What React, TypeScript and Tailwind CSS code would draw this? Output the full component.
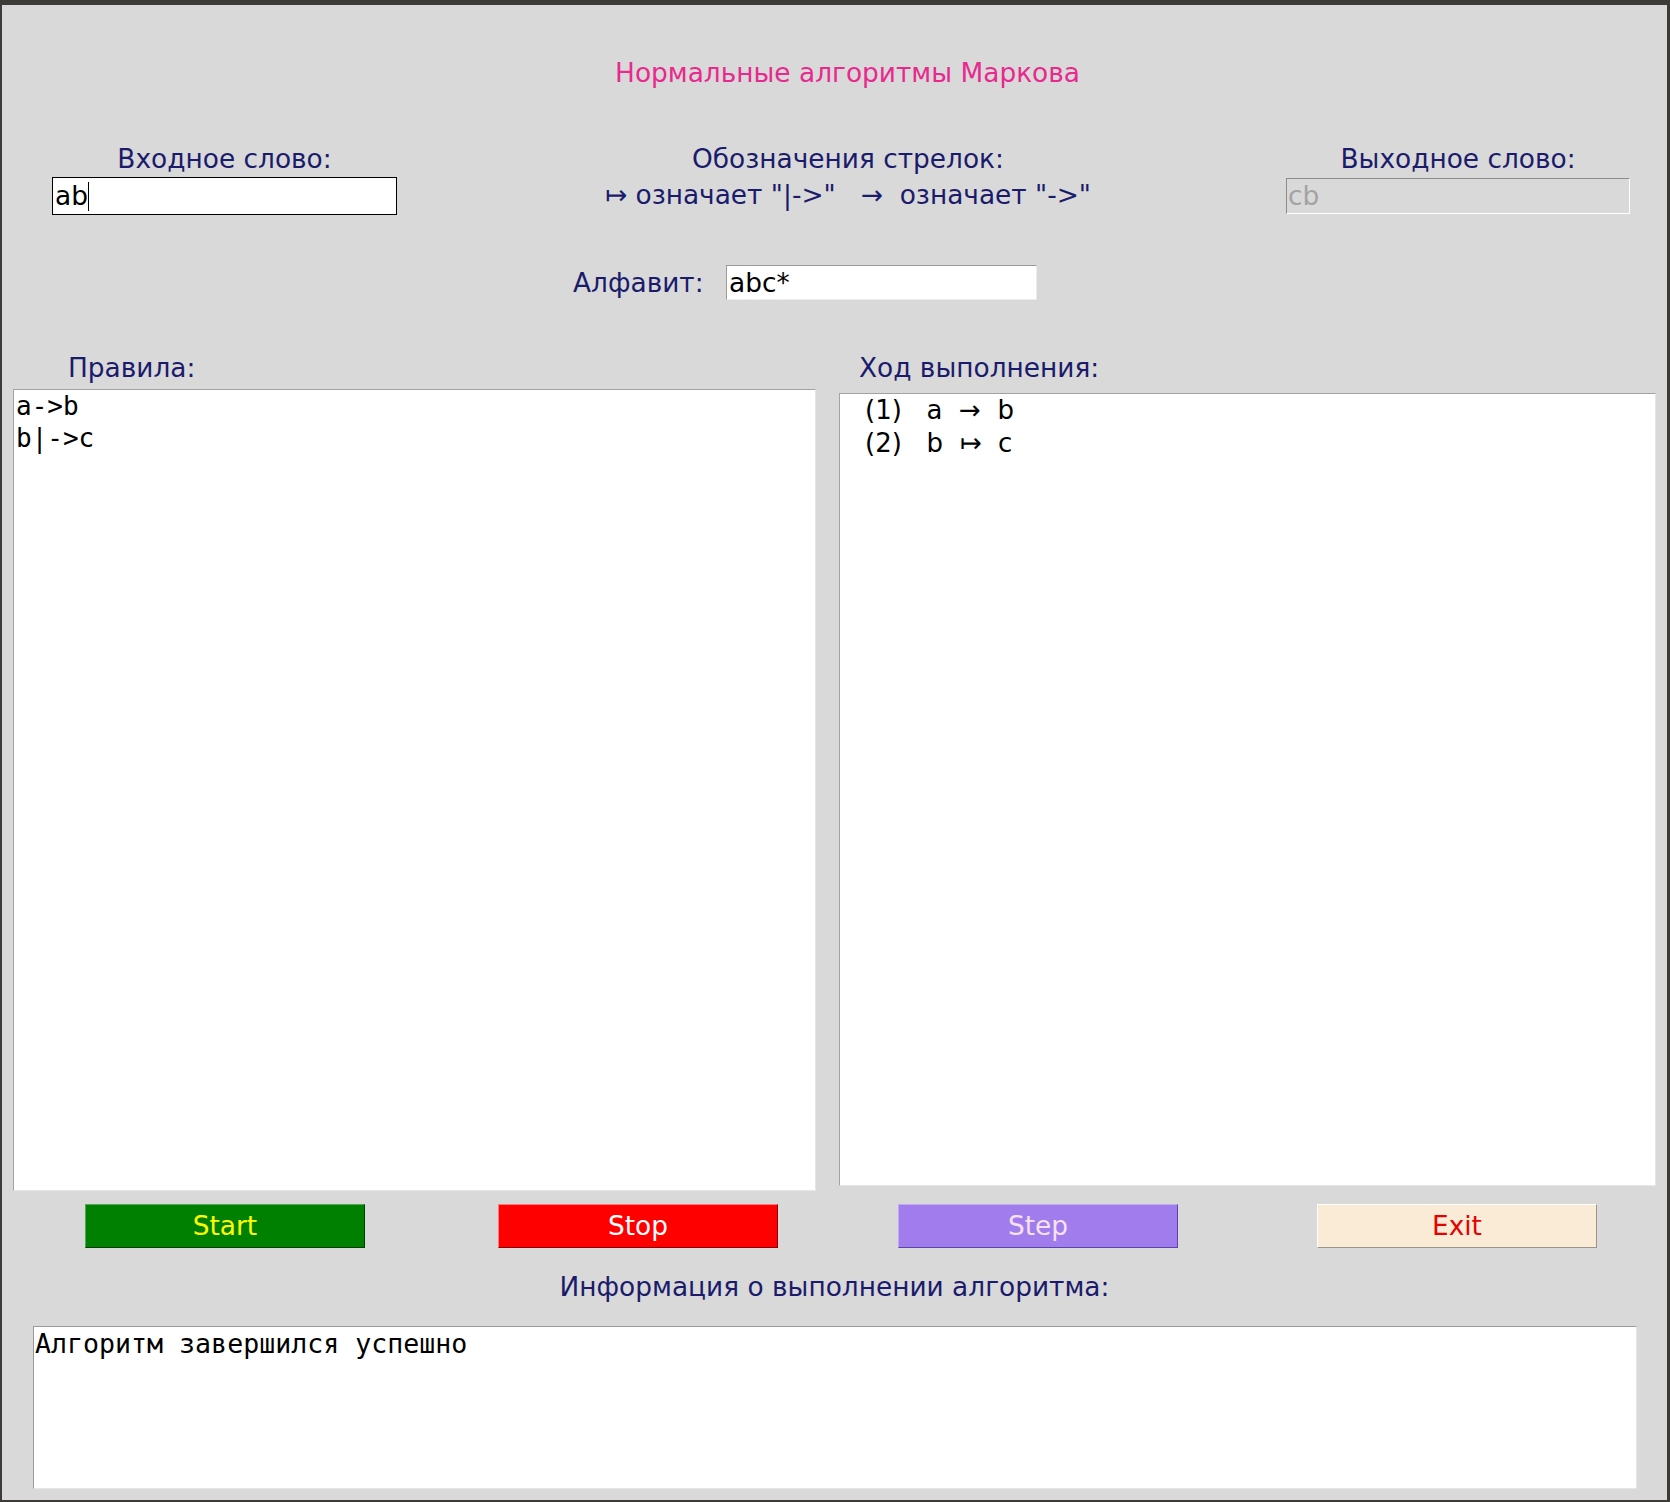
import React from 'react';

const sans = { fontFamily: '"DejaVu Sans", "Noto Sans", sans-serif' };
const mono = { fontFamily: '"DejaVu Sans Mono", "Liberation Mono", monospace' };

function Label({ children, className = '' }: { children: React.ReactNode; className?: string }) {
  return (
    <div className={`h-[30px] leading-[30px] text-[26.4px] text-[#1b1b6c] whitespace-pre ${className}`}>
      {children}
    </div>
  );
}

export default function App() {
  const buttons = [
    { label: 'Start', cls: 'ml-[83px] bg-[#008000] text-[#ffff00] border-t-[#52a852] border-l-[#52a852] border-b-[#004000] border-r-[#004000]' },
    { label: 'Stop', cls: 'ml-[133px] bg-[#ff0000] text-white border-t-[#ff7a7a] border-l-[#ff7a7a] border-b-[#8a0000] border-r-[#8a0000]' },
    { label: 'Step', cls: 'ml-[120px] bg-[#a07cec] text-[#f7e1ec] border-t-[#c2a9f5] border-l-[#c2a9f5] border-b-[#5e44a8] border-r-[#5e44a8]' },
    { label: 'Exit', cls: 'ml-[139px] bg-[#faebd7] text-[#e60000] border-t-white border-l-white border-b-[#9c958a] border-r-[#9c958a]' },
  ];

  return (
    <div className="w-[1670px] h-[1502px] bg-[#3c3b37] pt-[5px] pl-[2px] pr-[3px] pb-[2px]" style={sans}>
      <div className="h-full bg-[#d9d9d9] flex flex-col">
        {/* Title */}
        <div className="mt-[53px] pl-[26px] text-center h-[30px] leading-[30px] text-[26.4px] text-[#e8298f]">
          Нормальные алгоритмы Маркова
        </div>

        {/* Input / legend / output */}
        <div className="mt-[56px] flex items-start">
          <div className="ml-[50px] w-[345px] flex flex-col items-center">
            <Label>Входное слово:</Label>
            <div className="mt-[3px] w-full h-[38px] bg-white border border-black flex items-center pl-[2px] text-[26.4px] text-black">
              <span>ab</span>
              <span className="inline-block w-[1px] h-[29px] bg-black" />
            </div>
          </div>
          <div className="ml-[201px] w-[500px] flex flex-col items-center">
            <Label>Обозначения стрелок:</Label>
            <Label className="mt-[6px]">{'↦ означает "|->"   →  означает "->"'}</Label>
          </div>
          <div className="ml-[188px] w-[344px] flex flex-col items-center">
            <Label>Выходное слово:</Label>
            <div className="mt-[4px] w-full h-[36px] border border-t-[#8c8c8c] border-l-[#8c8c8c] border-b-white border-r-white flex items-center pl-[1px] text-[26.4px] text-[#a3a3a3]">
              cb
            </div>
          </div>
        </div>

        {/* Alphabet */}
        <div className="mt-[50px] flex items-center h-[35px]">
          <Label className="ml-[571px] w-[153px]">Алфавит:</Label>
          <div className="w-[311px] h-[35px] bg-white border border-t-[#9a9a9a] border-l-[#9a9a9a] border-b-[#ececec] border-r-[#ececec] flex items-center pl-[2px] text-[26.4px] text-black">
            abc*
          </div>
        </div>

        {/* Section labels */}
        <div className="mt-[53px] flex">
          <Label className="ml-[66px] w-[725px]">Правила:</Label>
          <Label className="ml-[66px]">Ход выполнения:</Label>
        </div>

        {/* Rules and trace */}
        <div className="flex items-start h-[808px]">
          <div
            className="ml-[11px] mt-[6px] w-[803px] h-[802px] bg-white border border-t-[#a3a3a3] border-l-[#a3a3a3] border-b-[#e6e6e6] border-r-[#e6e6e6] pl-[2px] text-[26px] leading-[32px] text-black"
            style={mono}
          >
            <div>a-&gt;b</div>
            <div>b|-&gt;c</div>
          </div>
          <div className="ml-[23px] mt-[10px] w-[817px] h-[793px] bg-white border border-t-[#a3a3a3] border-l-[#a3a3a3] border-b-[#e6e6e6] border-r-[#e6e6e6] pl-[25px] text-[26px] leading-[33px] text-black whitespace-pre">
            <div>{'(1)   a  →  b'}</div>
            <div>{'(2)   b  ↦  c'}</div>
          </div>
        </div>

        {/* Buttons */}
        <div className="mt-[13px] flex">
          {buttons.map((b) => (
            <button
              key={b.label}
              className={`w-[280px] h-[44px] border text-[26.4px] leading-[30px] ${b.cls}`}
              style={sans}
            >
              {b.label}
            </button>
          ))}
        </div>

        {/* Info */}
        <Label className="mt-[24px] text-center">Информация о выполнении алгоритма:</Label>
        <div
          className="mt-[24px] ml-[31px] w-[1604px] h-[163px] bg-white border border-t-[#9a9a9a] border-l-[#9a9a9a] border-b-[#e6e6e6] border-r-[#e6e6e6] pl-[1px] pt-[2px] text-[26.6px] leading-[30px] text-black"
          style={mono}
        >
          Алгоритм завершился успешно
        </div>
      </div>
    </div>
  );
}
